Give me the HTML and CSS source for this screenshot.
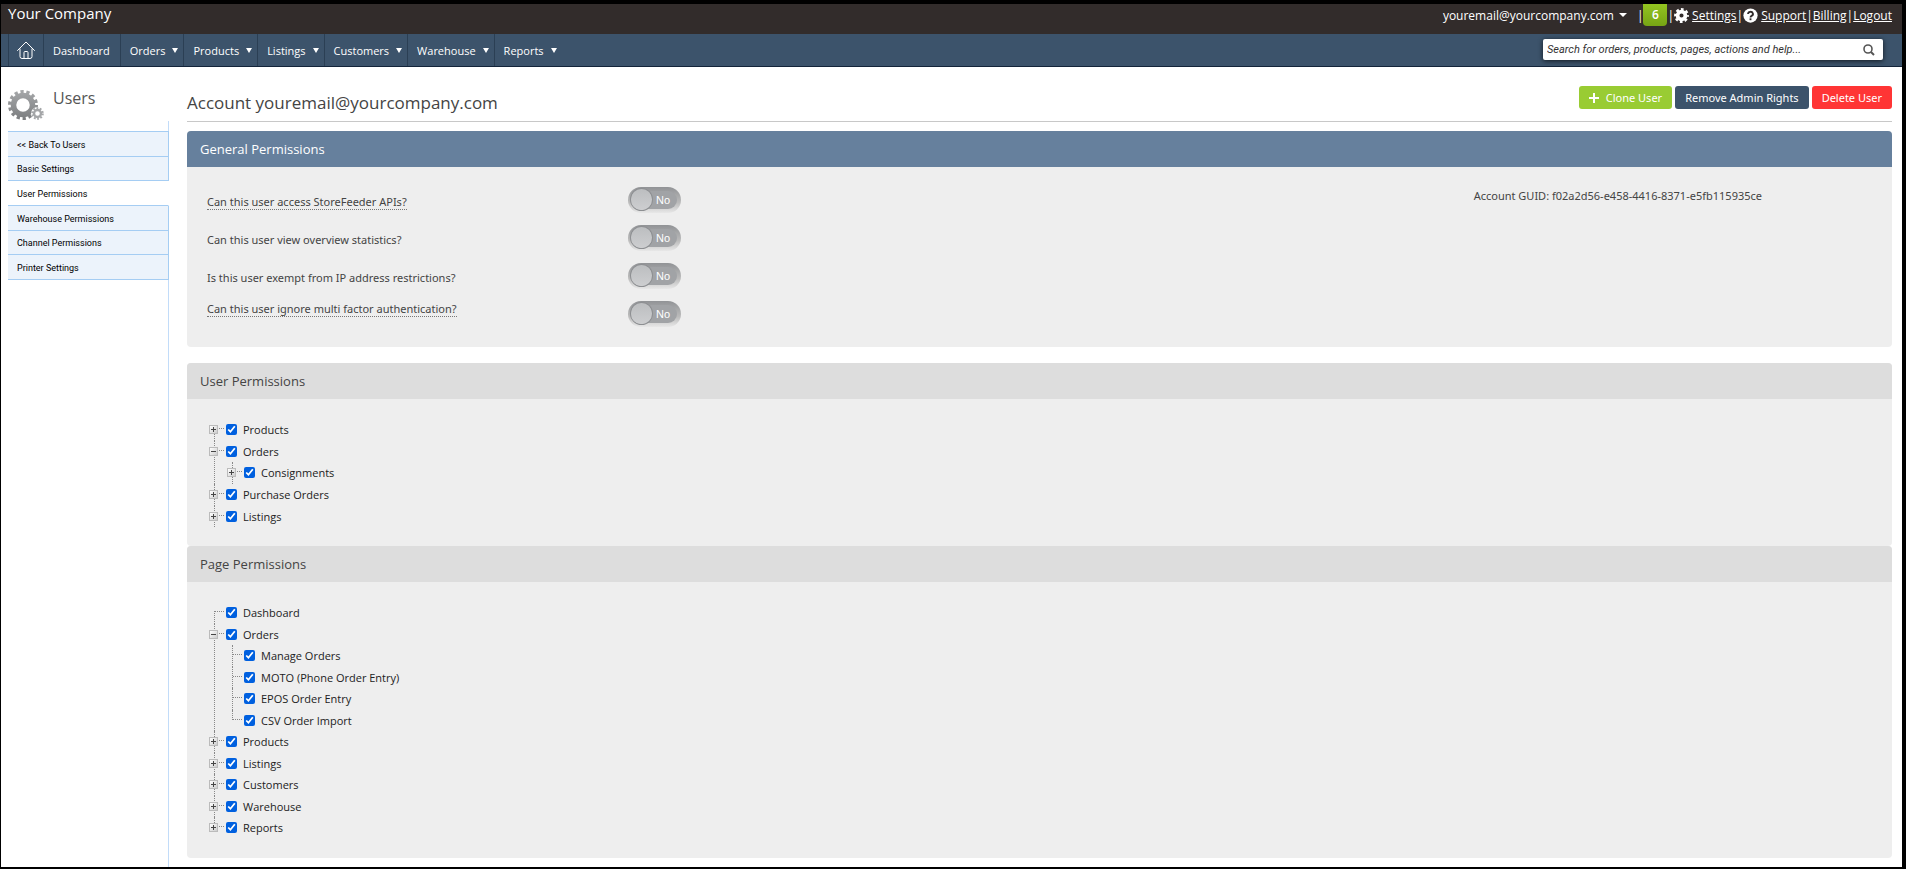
FILE: index.html
```html
<!DOCTYPE html>
<html lang="en">

<head>
	<meta charset="utf-8">
	<title>User Permissions</title>
	<link rel="stylesheet" href="styles.css">
</head>

<body>
	<header class="topbar">
		<div class="company">Your Company</div>
		<div class="account-links">
			<button type="button" class="account-menu">youremail@yourcompany.com <span class="caret"></span></button>
			<span class="sep">|</span>
			<span class="badge">6</span>
			<span class="sep">|</span>
			<svg class="link-icon" viewBox="0 0 16 16">
				<circle cx="8" cy="8" r="4.2" fill="none" stroke="#fff" stroke-width="4" />
				<circle cx="8" cy="8" r="6.4" fill="none" stroke="#fff" stroke-width="3" stroke-dasharray="2.8 2.226" stroke-dashoffset="1.4" />
			</svg>
			<a href="#">Settings</a>
			<span class="sep">|</span>
			<svg class="link-icon" viewBox="0 0 16 16">
				<circle cx="8" cy="8" r="7.6" fill="#fff" />
				<path d="M5.4 6.400a2.600 2.300 0 1 1 3.800 2Q8 9 8 10.200" fill="none" stroke="#322c2b" stroke-width="2" />
				<rect x="7" y="11" width="2" height="2" fill="#322c2b" />
			</svg>
			<a href="#">Support</a>
			<span class="sep">|</span>
			<a href="#">Billing</a>
			<span class="sep">|</span>
			<a href="#">Logout</a>
		</div>
	</header>

	<nav class="navbar">
		<a class="nav-item nav-home" href="#" aria-label="Home">
			<svg viewBox="0 0 18 18">
				<path d="M0.500 9.500 L9 1 L17.500 9.500 M3 8 V15.500 Q3 17.500 5 17.500 H13 Q15 17.500 15 15.500 V8 M7 17 V11.500 Q7 10.500 8 10.500 H10 Q11 10.500 11 11.500 V17" fill="none" stroke="#fff" stroke-linecap="round" />
			</svg>
		</a>
		<a class="nav-item" href="#">Dashboard</a>
		<a class="nav-item has-menu" href="#">Orders <span class="arrow"></span></a>
		<a class="nav-item has-menu" href="#">Products <span class="arrow"></span></a>
		<a class="nav-item has-menu" href="#">Listings <span class="arrow"></span></a>
		<a class="nav-item has-menu" href="#">Customers <span class="arrow"></span></a>
		<a class="nav-item has-menu" href="#">Warehouse <span class="arrow"></span></a>
		<a class="nav-item has-menu" href="#">Reports <span class="arrow"></span></a>
		<form class="search">
			<input type="text" aria-label="Search" placeholder="Search for orders, products, pages, actions and help...">
			<button type="submit" aria-label="Search">
				<svg viewBox="0 0 12 12">
					<circle cx="5" cy="5" r="4" fill="none" stroke="#555" stroke-width="1.600" />
					<path d="M8 8 L11 11" stroke="#555" stroke-width="2" />
				</svg>
			</button>
		</form>
	</nav>

	<div class="page">
		<aside class="sidebar">
			<div class="sidebar-title">
				<svg viewBox="0 0 36 32">
					<defs>
						<linearGradient id="gear" gradientUnits="userSpaceOnUse" x1="0" y1="0" x2="0" y2="30">
							<stop offset="0" stop-color="#a6a8aa" />
							<stop offset="1" stop-color="#7b7d7f" />
						</linearGradient>
					</defs>
					<circle cx="15" cy="15" r="9.500" fill="none" stroke="url(#gear)" stroke-width="5.500" />
					<circle cx="15" cy="15" r="13" fill="none" stroke="url(#gear)" stroke-width="4" stroke-dasharray="3.200 2.634" />
					<circle cx="29.500" cy="23.500" r="6.500" fill="#fff" />
					<circle cx="29.500" cy="23.500" r="3.500" fill="none" stroke="#a4a6a8" stroke-width="2.400" />
					<circle cx="29.500" cy="23.500" r="5.300" fill="none" stroke="#a4a6a8" stroke-width="2" stroke-dasharray="1.800 1.530" />
				</svg>
				<h2>Users</h2>
			</div>
			<ul class="side-menu">
				<li><a href="#">&lt;&lt; Back To Users</a></li>
				<li><a href="#">Basic Settings</a></li>
				<li class="active"><a href="#">User Permissions</a></li>
				<li><a href="#">Warehouse Permissions</a></li>
				<li><a href="#">Channel Permissions</a></li>
				<li><a href="#">Printer Settings</a></li>
			</ul>
		</aside>

		<main class="content">
			<div class="content-header">
				<h1>Account youremail@yourcompany.com</h1>
				<div class="actions">
					<button type="button" class="btn btn-green"><span class="plus"></span>Clone User</button>
					<button type="button" class="btn btn-navy">Remove Admin Rights</button>
					<button type="button" class="btn btn-red">Delete User</button>
				</div>
			</div>

			<section class="panel panel-general">
				<h3 class="panel-title">General Permissions</h3>
				<div class="general">
					<div class="questions">
						<div class="question">
							<label for="apis"><span class="hint">Can this user access StoreFeeder APIs?</span></label>
							<span class="toggle"><input type="checkbox" id="apis"><span>No</span></span>
						</div>
						<div class="question">
							<label for="stats">Can this user view overview statistics?</label>
							<span class="toggle"><input type="checkbox" id="stats"><span>No</span></span>
						</div>
						<div class="question">
							<label for="ip">Is this user exempt from IP address restrictions?</label>
							<span class="toggle"><input type="checkbox" id="ip"><span>No</span></span>
						</div>
						<div class="question">
							<label for="mfa"><span class="hint">Can this user ignore multi factor authentication?</span></label>
							<span class="toggle"><input type="checkbox" id="mfa"><span>No</span></span>
						</div>
					</div>
					<div class="guid">Account GUID: f02a2d56-e458-4416-8371-e5fb115935ce</div>
				</div>
			</section>

			<section class="panel">
				<h3 class="panel-title">User Permissions</h3>
				<ul class="tree">
					<li class="first"><button type="button" class="expander closed" aria-label="Expand"></button><label><input type="checkbox" checked>Products</label></li>
					<li><button type="button" class="expander" aria-label="Collapse"></button><label><input type="checkbox" checked>Orders</label>
						<ul>
							<li><button type="button" class="expander closed" aria-label="Expand"></button><label><input type="checkbox" checked>Consignments</label></li>
						</ul>
					</li>
					<li><button type="button" class="expander closed" aria-label="Expand"></button><label><input type="checkbox" checked>Purchase Orders</label></li>
					<li><button type="button" class="expander closed" aria-label="Expand"></button><label><input type="checkbox" checked>Listings</label></li>
				</ul>
			</section>

			<section class="panel">
				<h3 class="panel-title">Page Permissions</h3>
				<ul class="tree">
					<li class="first"><label><input type="checkbox" checked>Dashboard</label></li>
					<li><button type="button" class="expander" aria-label="Collapse"></button><label><input type="checkbox" checked>Orders</label>
						<ul>
							<li><label><input type="checkbox" checked>Manage Orders</label></li>
							<li><label><input type="checkbox" checked>MOTO (Phone Order Entry)</label></li>
							<li><label><input type="checkbox" checked>EPOS Order Entry</label></li>
							<li class="last"><label><input type="checkbox" checked>CSV Order Import</label></li>
						</ul>
					</li>
					<li><button type="button" class="expander closed" aria-label="Expand"></button><label><input type="checkbox" checked>Products</label></li>
					<li><button type="button" class="expander closed" aria-label="Expand"></button><label><input type="checkbox" checked>Listings</label></li>
					<li><button type="button" class="expander closed" aria-label="Expand"></button><label><input type="checkbox" checked>Customers</label></li>
					<li><button type="button" class="expander closed" aria-label="Expand"></button><label><input type="checkbox" checked>Warehouse</label></li>
					<li class="last"><button type="button" class="expander closed" aria-label="Expand"></button><label><input type="checkbox" checked>Reports</label></li>
				</ul>
			</section>
		</main>
	</div>
</body>

</html>
```
FILE: styles.css
```css
* {
	box-sizing: border-box;
	margin: 0;
	padding: 0;
}

body {
	display: flex;
	flex-direction: column;
	min-height: 100vh;
	border: solid #000;
	border-width: 4px 4px 2px 1px;
	background: #fff;
	color: #444;
	font-family: "Open Sans", "Noto Sans", sans-serif;
	font-size: 11px;
}

a {
	color: inherit;
}

button,
input {
	font: inherit;
}

ul {
	list-style: none;
}

/* Top bar */
.topbar {
	display: flex;
	justify-content: space-between;
	height: 30px;
	padding: 0 10px 0 7px;
	background: #322c2b;
	color: #fff;
}

.company {
	font-size: 15px;
	line-height: 18px;
}

.account-links {
	display: flex;
	align-items: center;
	height: 22px;
	font-size: 12px;
}

.account-menu {
	display: flex;
	align-items: center;
	gap: 5px;
	margin-right: 10px;
	border: 0;
	background: none;
	color: #fff;
}

.caret {
	border: 4px solid transparent;
	border-top-color: #fff;
	border-bottom: 0;
}

.badge {
	width: 24px;
	height: 22px;
	border-radius: 0 0 4px 4px;
	background: linear-gradient(#93c421, #77a414);
	font-weight: 600;
	line-height: 22px;
	text-align: center;
}

.link-icon {
	width: 15px;
	height: 15px;
	margin-right: 3px;
}

/* Navigation */
.navbar {
	display: flex;
	height: 33px;
	padding-left: 7px;
	border-bottom: 1px solid #13243a;
	background: #3c536b;
	color: #fff;
}

.nav-item {
	display: flex;
	align-items: center;
	gap: 7px;
	padding: 0 10px 0 9px;
	border-left: 1px solid #2b3f54;
	text-decoration: none;
}

.nav-item.has-menu {
	padding-right: 5px;
}

.nav-item.nav-home {
	padding: 0 8px;
}

.nav-home svg {
	width: 18px;
	height: 18px;
}

.arrow {
	border: 3px solid transparent;
	border-top: 5px solid #fff;
	border-bottom: 0;
}

.search {
	display: flex;
	align-items: center;
	width: 340px;
	height: 21px;
	margin: 5px 19px 0 auto;
	padding: 0 8px 0 4px;
	border-radius: 2px;
	background: #fff;
	box-shadow: 0 1px 5px rgba(0, 0, 0, 0.7);
}

.search input {
	flex: 1;
	border: 0;
	outline: 0;
	background: none;
	font: italic 11px Roboto, sans-serif;
}

.search input::placeholder {
	color: #333;
}

.search button {
	width: 12px;
	height: 12px;
	border: 0;
	background: none;
}

.search svg {
	display: block;
}

/* Page */
.page {
	display: flex;
	flex: 1;
}

.sidebar {
	display: flex;
	flex-direction: column;
	width: 168px;
	margin-left: 7px;
}

.sidebar-title {
	display: flex;
	gap: 9px;
	height: 54px;
	padding-top: 23px;
}

.sidebar-title svg {
	width: 36px;
	height: 32px;
}

.sidebar-title h2 {
	color: #555;
	font-size: 16px;
	font-weight: 400;
	line-height: 16px;
}

.side-menu {
	flex: 1;
	width: 161px;
	padding-top: 10px;
	border-right: 1px solid #c2dcf9;
}

.side-menu li {
	width: 161px;
	border-right: 1px solid #a5cdf3;
	border-bottom: 1px solid #a5cdf3;
	background: #ecf3fb;
}

.side-menu li:first-child {
	border-top: 1px solid #a5cdf3;
}

.side-menu .active {
	border-right-color: #fff;
	background: #fff;
}

.side-menu a {
	display: block;
	padding: 2px 9px 0;
	color: #000;
	font-family: Roboto, sans-serif;
	font-size: 9px;
	line-height: 22px;
	text-decoration: none;
}

.side-menu li:nth-child(3n+2) a {
	line-height: 21px;
}

.content {
	flex: 1;
	padding: 0 10px 9px 11px;
}

.content-header {
	display: flex;
	justify-content: space-between;
	align-items: flex-start;
	height: 55px;
	margin-bottom: 9px;
	padding-top: 19px;
	border-bottom: 1px solid #c8c8c8;
}

.content-header h1 {
	color: #444;
	font-size: 17px;
	font-weight: 400;
	line-height: 34px;
}

.actions {
	display: flex;
	gap: 3px;
}

.btn {
	display: flex;
	align-items: center;
	gap: 7px;
	height: 23px;
	padding: 0 10px;
	border: 0;
	border-radius: 3px;
	color: #fff;
	font-family: "Noto Sans", sans-serif;
}

.btn-green {
	background: #99cc33;
}

.btn-navy {
	background: #3c536b;
}

.btn-red {
	background: #ff3535;
}

.plus {
	width: 10px;
	height: 10px;
	background: linear-gradient(#fff, #fff) center / 10px 2px no-repeat, linear-gradient(#fff, #fff) center / 2px 10px no-repeat;
}

/* Panels */
.panel {
	border-radius: 4px;
	background: #eee;
	overflow: hidden;
}

.panel-general {
	margin-bottom: 16px;
}

.panel-title {
	padding: 0 13px;
	background: #ddd;
	color: #444;
	font-size: 13px;
	font-weight: 400;
	line-height: 36px;
}

.panel-general .panel-title {
	background: #66809d;
	color: #fff;
}

.general {
	display: flex;
	justify-content: space-between;
	padding: 14px 130px 14px 20px;
	font-family: "Noto Sans", sans-serif;
}

.question {
	display: flex;
	align-items: center;
	height: 38px;
}

.question label {
	width: 421px;
	padding-top: 2px;
}

.question:last-child label {
	align-self: flex-start;
	line-height: 24px;
}

.hint {
	border-bottom: 1px dotted #777;
}

.guid {
	line-height: 30px;
}

.toggle {
	position: relative;
	width: 53px;
	height: 26px;
	border-radius: 13px;
	background: linear-gradient(#919396, #bbb 60%, #e8e8e8);
}

.toggle input {
	position: absolute;
	inset: 0;
	opacity: 0;
}

.toggle span {
	display: block;
	margin: 4px;
	padding-left: 24px;
	border-radius: 9px;
	background: #a1a3a6;
	color: #fff;
	font: 11px/18px "Liberation Sans", sans-serif;
}

.toggle::after {
	content: "";
	position: absolute;
	top: 2px;
	left: 3px;
	width: 21px;
	height: 21px;
	border-radius: 50%;
	background: linear-gradient(#bcbec0, #cdced0);
	box-shadow: 0 0 0 1px #8d8f92;
}

/* Permission trees */
.tree {
	padding: 20px 20px 19px 21px;
	color: #222;
}

.tree li {
	position: relative;
	padding-left: 18px;
}

.tree li:nth-child(odd) {
	padding-bottom: 1px;
}

/* vertical and horizontal branch lines */
.tree li::before {
	content: "";
	position: absolute;
	top: 0;
	bottom: 0;
	left: 6px;
	border-left: 1px dotted #888;
}

.tree li::after {
	content: "";
	position: absolute;
	top: 9px;
	left: 7px;
	width: 9px;
	border-top: 1px dotted #888;
}

.tree .first::before {
	top: 9px;
}

.tree .last::before {
	bottom: auto;
	height: 10px;
}

.tree label {
	display: flex;
	align-items: center;
	gap: 6px;
	line-height: 21px;
}

.tree input {
	width: 11px;
	height: 11px;
	accent-color: #0060df;
}

.expander {
	position: absolute;
	z-index: 1;
	top: 6px;
	left: 1px;
	width: 9px;
	height: 9px;
	border: 1px solid #bbb;
	background: linear-gradient(#444, #444) center / 5px 1px no-repeat, linear-gradient(135deg, #fff, #ccc);
}

.expander.closed {
	background: linear-gradient(#444, #444) center / 5px 1px no-repeat, linear-gradient(#444, #444) center / 1px 5px no-repeat, linear-gradient(135deg, #fff, #ccc);
}
```
